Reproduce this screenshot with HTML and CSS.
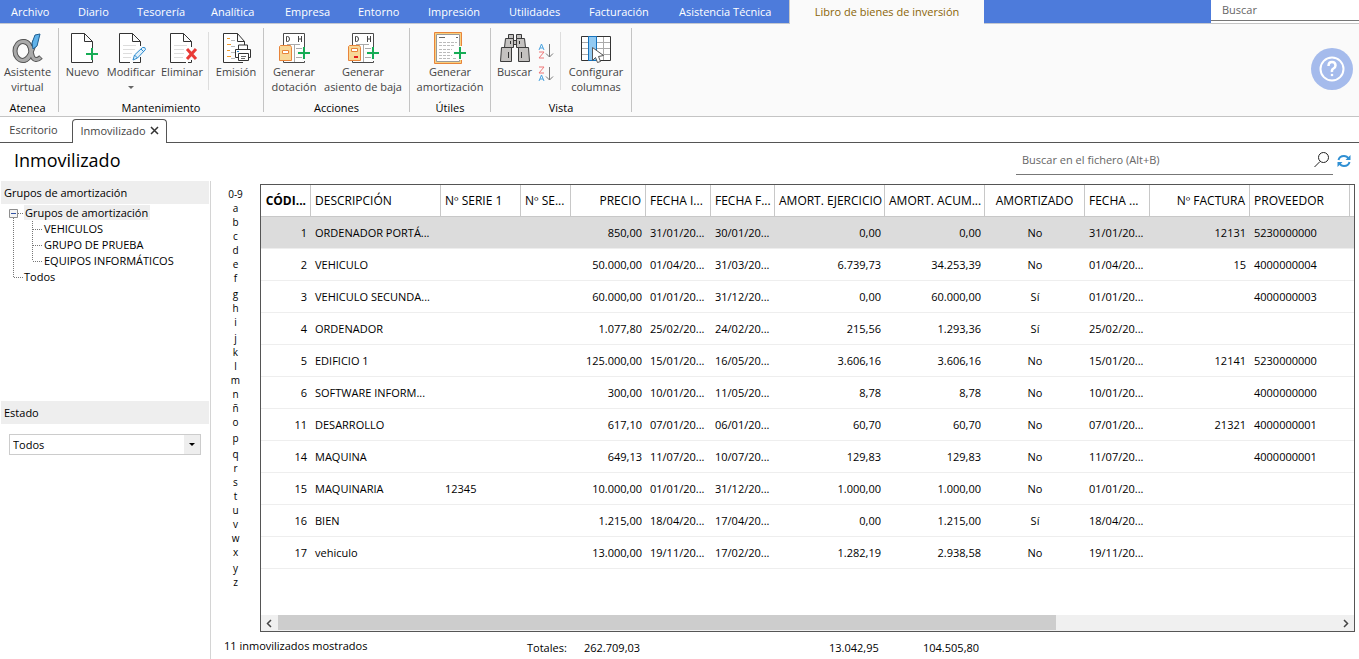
FILE: index.html
```html
<!DOCTYPE html>
<html lang="es">
<head>
<meta charset="utf-8">
<title>Inmovilizado</title>
<link rel="stylesheet" href="styles.css">
</head>
<body>
<div class="app">
  <header class="menubar">
    <nav class="menu">
      <button class="w67">Archivo</button><button class="w59">Diario</button><button class="w74">Tesorería</button><button class="w74">Analítica</button><button class="w73">Empresa</button><button class="w70">Entorno</button><button class="w81">Impresión</button><button class="w80">Utilidades</button><button class="w90">Facturación</button><button class="w121">Asistencia Técnica</button><button class="current">Libro de bienes de inversión</button>
    </nav>
    <input class="top-search" type="text" placeholder="Buscar" aria-label="Buscar">
  </header>

  <section class="ribbon">
    <div class="group g-atenea">
      <div class="tools">
        <button class="tool">
          <svg width="32" height="32" viewBox="0 0 32 32"><g fill="none"><ellipse cx="12" cy="19" rx="8" ry="9.500" stroke="#555" stroke-width="5"/><path d="M24 9C21 20 17 28 12 28.500M12 9.500C20 9.500 19 17 21 23C22 28 26 29 30 25" stroke="#555" stroke-width="5"/><ellipse cx="12" cy="19" rx="8" ry="9.500" stroke="#a9a9a9" stroke-width="3"/><path d="M24 9C21 20 17 28 12 28.500M12 9.500C20 9.500 19 17 21 23C22 28 26 29 29.500 25.500" stroke="#a9a9a9" stroke-width="3"/></g><path d="M24 3l5-1-3 12-4 3-1-6z" fill="#5fb2ea" stroke="#1f5f91"/></svg>
          <span>Asistente<br>virtual</span></button>
      </div>
      <div class="caption">Atenea</div>
    </div>
    <div class="group g-mant">
      <div class="tools">
        <button class="tool w47">
          <svg width="32" height="32" viewBox="0 0 32 32"><path d="M25.500 27v3.500h-21v-29h13l8 8V17M17.500 1.500v8h8" fill="#fff" stroke="#333"/><path d="M25 16v12M19 22h12" stroke="#16ac55" stroke-width="2"/></svg>
          <span>Nuevo</span></button>
        <button class="tool w50">
          <svg width="32" height="32" viewBox="0 0 32 32"><path d="M15 30.500H4.500v-29h13l8 8V14M25.500 25v5.500H18M17.500 1.500v8h8" fill="#fff" stroke="#333"/><path d="M8 13.500h13M8 17.500h12M8 21.500h9M8 25.500h8" stroke="#ddd"/><path d="M18 28l1.500-5 8-7.500q3-1 3 2l-8 8.500zM19.500 23l3 3M26 17l3 3" fill="#dff0fb" stroke="#2c8bd0"/></svg>
          <span>Modificar<br><i class="caret"></i></span></button>
        <button class="tool w52">
          <svg width="32" height="32" viewBox="0 0 32 32"><path d="M20 30.500H4.500v-29h13l8 8V15M25.500 28v2.500H22M17.500 1.500v8h8" fill="#fff" stroke="#333"/><path d="M8 13.500h13M8 17.500h10M8 21.500h10M8 25.500h9" stroke="#ddd"/><path d="M21 17l9 10M30 17l-9 10" stroke="#e93a36" stroke-width="3"/></svg>
          <span>Eliminar</span></button>
        <span class="divider"></span>
        <button class="tool w54">
          <svg width="32" height="32" viewBox="0 0 32 32"><path d="M23 30.500H3.500v-29h14l7 8V13M17.500 1.500v8h7" fill="#fff" stroke="#333"/><path d="M7 6.500h3M7 12.500h4M7 18.500h3M7 24.500h4" stroke="#f09a2c"/><path d="M11 8.500h4M11 14.500h4M11 20.500h4M11 26.500h4" stroke="#bbb"/><path d="M18 25.500h-2.500v-8h15v8H28M18.500 17v-4h9v4" fill="#fff" stroke="#333"/><path d="M18.500 21.500h10v7h-10z" fill="#fff" stroke="#333"/><path d="M21 24.500h5M21 26.500h4" stroke="#666"/><path d="M17 19.500h2" stroke="#2c8bd0"/></svg>
          <span>Emisión</span></button>
      </div>
      <div class="caption">Mantenimiento</div>
    </div>
    <div class="group g-acc">
      <div class="tools">
        <button class="tool w60">
          <svg width="32" height="32" viewBox="0 0 32 32"><path d="M5.500 30.500v-29h21v29z" fill="#fff" stroke="#4a4a4a"/><path d="M16.500 12v18M9 12.500h13M18 16.500h6M18 20.500h5M18 25.500h6" stroke="#aaa"/><path d="M8.500 4.500v5h1q2 0 2-2.500t-2-2.500zM20.500 4v6M23.500 4v6M20 7h3" fill="none" stroke="#444"/><path d="M26 15v14M18 21h14" stroke="#fafafa" stroke-width="4"/><path d="M2.500 13.500h10l1 2v13h-12v-14z" fill="#f8d898" stroke="#e8843a"/><path d="M4.500 18.500h6v3h-6z" fill="#fff" stroke="#e8843a"/><path d="M26 15v12M20 21h12" stroke="#16ac55" stroke-width="2"/></svg>
          <span>Generar<br>dotación</span></button>
        <button class="tool w78">
          <svg width="32" height="32" viewBox="0 0 32 32"><path d="M5.500 30.500v-29h21v29z" fill="#fff" stroke="#4a4a4a"/><path d="M16.500 12v18M9 12.500h13M18 16.500h6M18 20.500h5M18 25.500h6" stroke="#aaa"/><path d="M8.500 4.500v5h1q2 0 2-2.500t-2-2.500zM20.500 4v6M23.500 4v6M20 7h3" fill="none" stroke="#444"/><path d="M26 15v14M18 21h14" stroke="#fafafa" stroke-width="4"/><path d="M2.500 13.500h10l1 2v13h-12v-14z" fill="#f8d898" stroke="#e8843a"/><path d="M4.500 16.500h6v3h-6z" fill="#fff" stroke="#e8843a"/><path d="M7 25h4" stroke="#e21b1b" stroke-width="2"/><path d="M26 15v12M20 21h12" stroke="#16ac55" stroke-width="2"/></svg>
          <span>Generar<br>asiento de baja</span></button>
      </div>
      <div class="caption">Acciones</div>
    </div>
    <div class="group g-util">
      <div class="tools">
        <button class="tool">
          <svg width="34" height="32" viewBox="0 0 34 32"><path d="M1.500.5h27v31h-27z" fill="#f8d080" stroke="#e8843a"/><path d="M3.500 2.500h23v27h-23z" fill="#fff" stroke="#999"/><path d="M6 5.500h6M23 5.500h2" stroke="#666"/><path d="M6 10.500h18M6 13.500h16M6 17.500h13M6 20.500h12M6 23.500h13M6 26.500h12M20 26.500h4" stroke="#bbb" stroke-dasharray="3 1"/><path d="M27 14v14M20 21h14" stroke="#fafafa" stroke-width="4"/><path d="M27 15v12M21 21h12" stroke="#16ac55" stroke-width="2"/></svg>
          <span>Generar<br>amortización</span></button>
      </div>
      <div class="caption">Útiles</div>
    </div>
    <div class="group g-vista">
      <div class="tools">
        <button class="tool w47">
          <svg width="32" height="32" viewBox="0 0 32 32"><g fill="#c4c2c0" stroke="#3b3b3b"><path d="M9.500 2.500h5v4h-5zM17.500 2.500h5v4h-5zM6.500 6.500h8v9h-9zM17.500 6.500h8l1 9h-9zM14.500 8.500h3v4h-3z"/><path d="M2.500 15.500h10v14h-11zM19.500 15.500h10l1 14h-11z"/></g><path d="M11.500 9v3M20.500 9v3M9.500 20v6M22.500 20v6" stroke="#333"/></svg>
          <span>Buscar</span></button>
        <span class="sorts">
          <button aria-label="Orden ascendente"><svg width="16" height="18" viewBox="0 0 16 18" fill="none"><path d="M1 8l2.500-6L6 8M2 6h3" stroke="#4ba3df"/><path d="M1 10h5L1 16h5" stroke="#ee7777"/><path d="M11.500 2v13M8 11.500l3.500 3.500 3.500-3.500" stroke="#777"/></svg></button>
          <button aria-label="Orden descendente"><svg width="16" height="18" viewBox="0 0 16 18" fill="none"><path d="M1 2h5L1 8h5" stroke="#ee7777"/><path d="M1 16l2.500-6L6 16M2 14h3" stroke="#4ba3df"/><path d="M11.500 2v13M8 11.500l3.500 3.500 3.500-3.500" stroke="#777"/></svg></button>
        </span>
        <span class="divider"></span>
        <button class="tool w70">
          <svg width="32" height="32" viewBox="0 0 32 32"><path d="M1.500 4.500h29v24h-29z" fill="#fff"/><path d="M2 10.500h28M2 16.500h28M2 22.500h28M23.500 5v23" stroke="#aaa"/><path d="M1.500 4.500h29v24h-29z" fill="none" stroke="#333"/><path d="M8.500 4.500h8v24h-8z" fill="#92caf2" stroke="#1673bd"/><path d="M12.500 15.500l11 8-5 1 2 5-3 1-2-5-3 3z" fill="#fff" stroke="#555"/></svg>
          <span>Configurar<br>columnas</span></button>
      </div>
      <div class="caption">Vista</div>
    </div>
    <button class="help" aria-label="Ayuda"><svg width="42" height="42" viewBox="0 0 42 42"><circle cx="21" cy="21" r="21" fill="#a5bbec"/><g fill="none" stroke="#fff" stroke-width="2"><circle cx="21" cy="21" r="11.500"/><path d="M17.500 18q0-4 3.500-4t3.500 3.500q0 2-2 3T21 24" stroke-width="2.500"/></g><circle cx="21" cy="27" r="1.300" fill="#fff"/></svg></button>
  </section>

  <div class="tabs">
    <button class="tab">Escritorio</button>
    <button class="tab active">Inmovilizado <svg width="9" height="9" viewBox="0 0 9 9"><path d="M1 1l7 7M8 1l-7 7" stroke="#333" stroke-width="1.500"/></svg></button>
  </div>

  <div class="titlebar">
    <h1>Inmovilizado</h1>
    <div class="file-search">
      <input type="text" placeholder="Buscar en el fichero (Alt+B)" aria-label="Buscar en el fichero">
      <svg width="18" height="18" viewBox="0 0 18 18" fill="none" stroke="#222"><circle cx="10.500" cy="6.500" r="5"/><path d="M7 10.500L1.500 16"/></svg>
    </div>
    <button class="refresh" aria-label="Actualizar"><svg width="14" height="14" viewBox="0 0 14 14"><path d="M1.500 6Q2.500 2 7 2q3 0 4.500 2.500M12.500 8Q11.500 12 7 12q-3 0-4.500-2.500" fill="none" stroke="#2f8fd3" stroke-width="2"/><path d="M13.500 1v5H8.500zM.5 13V8h5z" fill="#2f8fd3"/></svg></button>
  </div>

  <main class="work">
    <aside class="side">
      <h2>Grupos de amortización</h2>
      <div class="tree">
        <svg width="44" height="80" viewBox="0 0 44 80" fill="none"><path d="M13.500 13v60M14 72.500h10M18 8.500h5M32.500 16v40M33 24.500h9M33 40.500h9M33 56.500h9" stroke="#777" stroke-dasharray="1 1"/><path d="M9.500 4.500h8v8h-8z" fill="#f4f4f4" stroke="#8e8e8e"/><path d="M11 8.500h5" stroke="#3353a4"/></svg>
        <ul>
          <li><span class="sel">Grupos de amortización</span></li>
          <li class="sub">VEHICULOS</li>
          <li class="sub">GRUPO DE PRUEBA</li>
          <li class="sub">EQUIPOS INFORMÁTICOS</li>
          <li>Todos</li>
        </ul>
      </div>
      <h2 id="estado">Estado</h2>
      <div class="combo"><select aria-labelledby="estado"><option>Todos</option></select><i></i></div>
    </aside>

    <nav class="alphabet">
      <a href="#">0-9</a><a href="#">a</a><a href="#">b</a><a href="#">c</a><a href="#">d</a><a href="#">e</a><a href="#">f</a><a href="#" class="desc">g</a><a href="#">h</a><a href="#">i</a><a href="#" class="desc">j</a><a href="#">k</a><a href="#">l</a><a href="#">m</a><a href="#">n</a><a href="#">ñ</a><a href="#">o</a><a href="#" class="desc">p</a><a href="#" class="desc">q</a><a href="#">r</a><a href="#">s</a><a href="#">t</a><a href="#">u</a><a href="#">v</a><a href="#">w</a><a href="#">x</a><a href="#" class="desc">y</a><a href="#">z</a>
    </nav>

    <section class="content">
      <div class="grid">
        <table>
          <colgroup><col class="w50"><col class="w130"><col class="w80"><col class="w50"><col class="w75"><col class="w65"><col class="w64"><col class="w110"><col class="w100"><col class="w100"><col class="w65"><col class="w100"><col class="w100"><col></colgroup>
          <thead><tr><th class="r b">CÓDI...</th><th>DESCRIPCIÓN</th><th>Nº SERIE 1</th><th>Nº SE...</th><th class="r">PRECIO</th><th>FECHA I...</th><th>FECHA F...</th><th class="r">AMORT. EJERCICIO</th><th class="r">AMORT. ACUM...</th><th class="c">AMORTIZADO</th><th>FECHA ...</th><th class="r">Nº FACTURA</th><th>PROVEEDOR</th><th></th></tr></thead>
          <tbody>
            <tr class="on"><td class="r">1</td><td>ORDENADOR PORTÁ...</td><td></td><td></td><td class="r">850,00</td><td>31/01/20...</td><td>30/01/20...</td><td class="r">0,00</td><td class="r">0,00</td><td class="c">No</td><td>31/01/20...</td><td class="r">12131</td><td>5230000000</td><td></td></tr>
            <tr><td class="r">2</td><td>VEHICULO</td><td></td><td></td><td class="r">50.000,00</td><td>01/04/20...</td><td>31/03/20...</td><td class="r">6.739,73</td><td class="r">34.253,39</td><td class="c">No</td><td>01/04/20...</td><td class="r">15</td><td>4000000004</td><td></td></tr>
            <tr><td class="r">3</td><td>VEHICULO SECUNDA...</td><td></td><td></td><td class="r">60.000,00</td><td>01/01/20...</td><td>31/12/20...</td><td class="r">0,00</td><td class="r">60.000,00</td><td class="c">Sí</td><td>01/01/20...</td><td class="r"></td><td>4000000003</td><td></td></tr>
            <tr><td class="r">4</td><td>ORDENADOR</td><td></td><td></td><td class="r">1.077,80</td><td>25/02/20...</td><td>24/02/20...</td><td class="r">215,56</td><td class="r">1.293,36</td><td class="c">Sí</td><td>25/02/20...</td><td class="r"></td><td></td><td></td></tr>
            <tr><td class="r">5</td><td>EDIFICIO 1</td><td></td><td></td><td class="r">125.000,00</td><td>15/01/20...</td><td>16/05/20...</td><td class="r">3.606,16</td><td class="r">3.606,16</td><td class="c">No</td><td>15/01/20...</td><td class="r">12141</td><td>5230000000</td><td></td></tr>
            <tr><td class="r">6</td><td>SOFTWARE INFORM...</td><td></td><td></td><td class="r">300,00</td><td>10/01/20...</td><td>11/05/20...</td><td class="r">8,78</td><td class="r">8,78</td><td class="c">No</td><td>10/01/20...</td><td class="r"></td><td>4000000000</td><td></td></tr>
            <tr><td class="r">11</td><td>DESARROLLO</td><td></td><td></td><td class="r">617,10</td><td>07/01/20...</td><td>06/01/20...</td><td class="r">60,70</td><td class="r">60,70</td><td class="c">No</td><td>07/01/20...</td><td class="r">21321</td><td>4000000001</td><td></td></tr>
            <tr><td class="r">14</td><td>MAQUINA</td><td></td><td></td><td class="r">649,13</td><td>11/07/20...</td><td>10/07/20...</td><td class="r">129,83</td><td class="r">129,83</td><td class="c">No</td><td>11/07/20...</td><td class="r"></td><td>4000000001</td><td></td></tr>
            <tr><td class="r">15</td><td>MAQUINARIA</td><td>12345</td><td></td><td class="r">10.000,00</td><td>01/01/20...</td><td>31/12/20...</td><td class="r">1.000,00</td><td class="r">1.000,00</td><td class="c">No</td><td>01/01/20...</td><td class="r"></td><td></td><td></td></tr>
            <tr><td class="r">16</td><td>BIEN</td><td></td><td></td><td class="r">1.215,00</td><td>18/04/20...</td><td>17/04/20...</td><td class="r">0,00</td><td class="r">1.215,00</td><td class="c">Sí</td><td>18/04/20...</td><td class="r"></td><td></td><td></td></tr>
            <tr><td class="r">17</td><td>vehiculo</td><td></td><td></td><td class="r">13.000,00</td><td>19/11/20...</td><td>17/02/20...</td><td class="r">1.282,19</td><td class="r">2.938,58</td><td class="c">No</td><td>19/11/20...</td><td class="r"></td><td></td><td></td></tr>
          </tbody>
        </table>
        <div class="scroll">
          <button aria-label="Desplazar a la izquierda"><svg width="17" height="15" viewBox="0 0 17 15"><path d="M10 4L6.500 7.500 10 11" fill="none" stroke="#444" stroke-width="1.500"/></svg></button>
          <div class="track"><div class="thumb"></div></div>
          <button aria-label="Desplazar a la derecha"><svg width="17" height="15" viewBox="0 0 17 15"><path d="M7 4l3.500 3.500L7 11" fill="none" stroke="#444" stroke-width="1.500"/></svg></button>
        </div>
      </div>
      <footer class="totals">
        <span class="count">11 inmovilizados mostrados</span>
        <span class="t1">Totales:</span><span class="t2">262.709,03</span><span class="t3">13.042,95</span><span class="t4">104.505,80</span>
      </footer>
    </section>
  </main>
</div>
</body>
</html>
```
FILE: styles.css
```css
* { box-sizing: border-box; }
body { margin: 0; font: 11px/16px "Open Sans", "Noto Sans", sans-serif; color: #000; background: #fff; }
button, input, select { font: inherit; color: inherit; border: 0; padding: 0; margin: 0; background: none; border-radius: 0; }
a { color: inherit; text-decoration: none; }
svg { display: block; flex: none; }
.app { display: flex; flex-direction: column; height: 100vh; }

.menubar { display: flex; height: 24px; background: #4d7bdb; }
.menu { display: flex; flex: 1; border-bottom: 1px solid #c4c8d0; }
.menu button { flex: none; padding-left: 11px; color: #fff; text-align: left; white-space: nowrap; }
.menu .current { width: 195px; margin-bottom: -1px; padding: 0; background: #fafafa; border-left: 1px solid #c8c8c8; color: #8a6508; text-align: center; }
.top-search { width: 148px; height: 21px; padding: 0 11px 2px; background: #fff; border-bottom: 1px solid #777; box-shadow: 0 2px #fff, 0 3px #c4c4c4; outline: 0; }
::placeholder { color: #666; opacity: 1; }

.ribbon { display: flex; height: 93px; padding: 4px 0; background: #fafafa; border-bottom: 1px solid #c4c4c4; }
.group { display: flex; flex-direction: column; border-right: 1px solid #c4c4c4; }
.g-atenea { width: 59px; }
.g-mant { width: 205px; }
.g-acc { width: 146px; }
.g-util { width: 81px; }
.g-vista { width: 141px; }
.tools { display: flex; flex: 1; padding-top: 4px; }
.tool { display: flex; flex-direction: column; align-items: center; color: #444; line-height: 15px; white-space: nowrap; padding: 0; }
.g-atenea .tools, .g-util .tools { justify-content: center; }
.g-atenea .tool { padding-right: 3px; }
.g-mant .tools { justify-content: space-between; }
.caption { height: 16px; line-height: 24px; text-align: center; }
.g-atenea .caption { padding-right: 3px; }
.caret { display: inline-block; border: 3px solid transparent; border-top-color: #666; border-bottom: 0; vertical-align: 2px; }
.divider { width: 1px; height: 58px; background: #ddd; }
.sorts { display: flex; flex-direction: column; gap: 5px; width: 22px; padding-top: 10px; }
.help { margin: 19px 6px 0 auto; height: 44px; }

.tabs { display: flex; height: 26px; padding-top: 2px; border-bottom: 1px solid #555; color: #444; }
.tab { width: 72px; padding: 0 5px 2px 0; }
.tab.active { display: flex; align-items: center; justify-content: center; gap: 4px; width: 95px; margin-bottom: -1px; padding: 0 0 2px; background: #fff; border: 1px solid #555; border-bottom: 0; border-radius: 4px 4px 0 0; }

.titlebar { display: flex; height: 38px; padding-right: 8px; }
h1 { margin: 0 auto 0 14px; font-size: 18px; line-height: 35px; font-weight: 400; }
.file-search { display: flex; align-items: center; width: 317px; height: 32px; padding: 3px 2px 0 6px; border-bottom: 1px solid #777; }
.file-search input { flex: 1; outline: 0; }
.refresh { margin: 0 0 2px 4px; height: 36px; }

.work { display: flex; flex: 1; min-height: 0; }
.side { width: 211px; border-right: 1px solid #d4d4d4; padding: 0 1px; }
h2 { margin: 0; padding-left: 3px; background: #eee; font-size: 11px; line-height: 23px; font-weight: 400; }
.tree { display: flex; height: 197px; }
.tree svg { margin: 1px -20px 0 -1px; }
.tree ul { margin: 1px 0 0; padding: 0; list-style: none; }
.sel { background: #eee; padding: 0 2px 0 1px; }
.tree li { white-space: nowrap; }
.tree .sub { padding-left: 20px; }
.combo { position: relative; margin: 10px 8px; }
.combo select { appearance: none; width: 100%; height: 21px; padding-left: 3px; border: 1px solid #ccc; background: #fff; }
.combo i { position: absolute; right: 1px; top: 1px; width: 16px; height: 19px; background: #eee; pointer-events: none; }
.combo i::after { content: ""; display: block; margin: 8px 5px; border: 3px solid transparent; border-top-color: #000; border-bottom: 0; }

.alphabet { display: flex; flex-direction: column; width: 49px; padding-top: 6px; text-align: center; font-size: 10px; line-height: 14px; }
.alphabet .desc { padding-top: 2px; }

.content { flex: 1; min-width: 0; display: flex; flex-direction: column; padding: 3px 4px 0 0; }
.grid { flex: 1; min-height: 0; display: flex; flex-direction: column; border: 1px solid #555; }
table { width: 100%; table-layout: fixed; border-collapse: separate; border-spacing: 0; }
th, td { height: 32px; padding: 0 4px; text-align: left; font-weight: 400; white-space: nowrap; border-bottom: 1px solid #eee; }
th { font-size: 12px; border-right: 1px solid #c8c8c8; border-bottom-color: #c8c8c8; }
th:last-child { border-right: 0; padding: 0; }
td:last-child { padding: 0; }
.r { text-align: right; }
.c { text-align: center; }
.b { font-weight: 700; }
.on td { background: #dcdcdc; }
.scroll { display: flex; height: 16px; margin-top: auto; background: #f0f0f0; }
.track { flex: 1; }
.thumb { width: 73.500%; height: 15px; background: #cdcdcd; }
.totals { display: flex; height: 27px; margin-left: -36px; padding-top: 8px; }
.count { width: 303px; margin-top: -2px; }
.t1 { width: 57px; }
.t2 { width: 245px; }
.t3 { width: 94px; }

.w47 { width: 47px; }
.w50 { width: 50px; }
.w52 { width: 52px; }
.w54 { width: 54px; }
.w59 { width: 59px; }
.w60 { width: 60px; }
.w64 { width: 64px; }
.w65 { width: 65px; }
.w67 { width: 67px; }
.w70 { width: 70px; }
.w73 { width: 73px; }
.w74 { width: 74px; }
.w75 { width: 75px; }
.w78 { width: 78px; }
.w80 { width: 80px; }
.w81 { width: 81px; }
.w90 { width: 90px; }
.w100 { width: 100px; }
.w110 { width: 110px; }
.w121 { width: 121px; }
.w130 { width: 130px; }
```
